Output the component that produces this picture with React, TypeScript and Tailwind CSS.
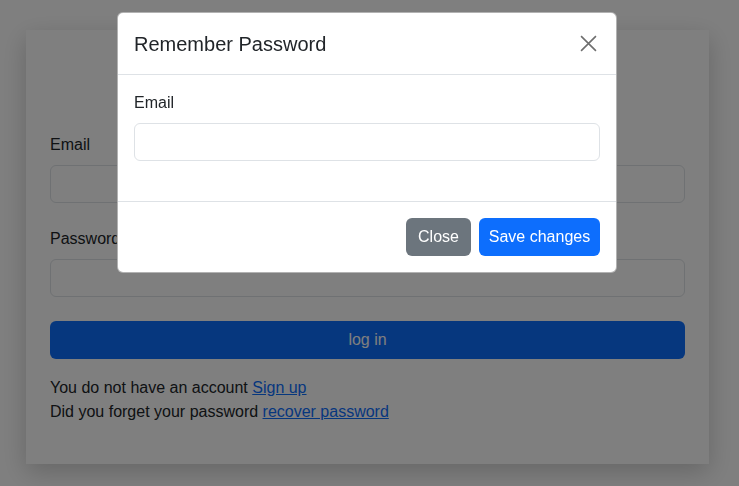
import React from "react";

const font = { fontFamily: '"Segoe UI", "Liberation Sans", "Noto Sans", sans-serif' };

function CloseIcon() {
  return (
    <svg width="17" height="17" viewBox="0 0 16 16" fill="none">
      <path d="M1 1L15 15M15 1L1 15" stroke="#6e6e6e" strokeWidth="1.5" />
    </svg>
  );
}

export default function App() {
  return (
    <div className="relative min-h-[486px] bg-white text-[#212529]" style={font}>
      {/* login card behind the modal */}
      <div className="pt-[30px]">
        <div className="ml-[26px] w-[683px] bg-white px-6 pt-6 pb-[40px] shadow-[0_0.5rem_1.5rem_rgba(0,0,0,0.2)]">
          <h2 className="h-[79px] text-center text-[32px] font-medium leading-[40px]">Login</h2>
          <label className="mb-2 block text-base leading-6">Email</label>
          <div className="mb-6 h-[38px] rounded-md border border-[#dee2e6] bg-white" />
          <label className="mb-2 block text-base leading-6">Password</label>
          <div className="mb-6 h-[38px] rounded-md border border-[#dee2e6] bg-white" />
          <button className="mb-[17px] h-[38px] w-full rounded-md bg-[#0d6efd] text-base text-white">log in</button>
          <p className="text-base leading-6">
            You do not have an account <a className="text-[#0d6efd] underline">Sign up</a>
          </p>
          <p className="text-base leading-6">
            Did you forget your password <a className="text-[#0d6efd] underline">recover password</a>
          </p>
        </div>
      </div>

      {/* modal overlay */}
      <div className="fixed inset-0 bg-black/50">
        <div className="ml-[117px] mt-[12px] w-[500px] rounded-md border border-black/30 bg-white">
          <div className="flex h-[62px] items-center justify-between border-b border-[#dee2e6] px-4">
            <h5 className="text-xl font-medium leading-[30px]">Remember Password</h5>
            <button className="flex h-6 w-6 items-center justify-center">
              <CloseIcon />
            </button>
          </div>
          <div className="px-4 pt-4 pb-[40px]">
            <label className="mb-2 block text-base leading-6">Email</label>
            <div className="h-[38px] rounded-md border border-[#dee2e6] bg-white" />
          </div>
          <div className="flex items-center justify-end gap-2 border-t border-[#dee2e6] px-4 pt-4 pb-4">
            <button className="h-[38px] w-[65px] rounded-md bg-[#6c757d] text-base text-white">Close</button>
            <button className="h-[38px] w-[121px] rounded-md bg-[#0d6efd] text-base text-white">Save changes</button>
          </div>
        </div>
      </div>
    </div>
  );
}
